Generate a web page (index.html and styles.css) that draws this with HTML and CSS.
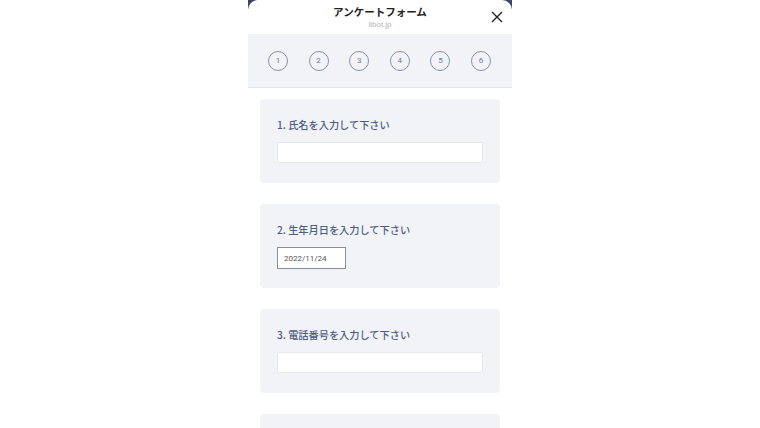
FILE: index.html
```html
<!DOCTYPE html>
<html lang="ja">
<head>
<meta charset="utf-8">
<link rel="stylesheet" href="styles.css">
</head>
<body>
<div class="frame">
  <div class="panel">
    <header class="header">
      <div class="title">アンケートフォーム</div>
      <div class="sub">libot.jp</div>
      <button class="close" aria-label="close">
        <svg width="12" height="12" viewBox="0 0 12 12"><path d="M1 1L11 11M11 1L1 11" stroke="#222" stroke-width="1.4" fill="none"/></svg>
      </button>
    </header>
    <nav class="steps">
      <span class="step">1</span>
      <span class="step">2</span>
      <span class="step">3</span>
      <span class="step">4</span>
      <span class="step">5</span>
      <span class="step">6</span>
    </nav>
    <main class="cards">
      <section class="card">
        <div class="label">1. 氏名を入力して下さい</div>
        <div class="input"></div>
      </section>
      <section class="card">
        <div class="label">2. 生年月日を入力して下さい</div>
        <div class="date">2022/11/24</div>
      </section>
      <section class="card">
        <div class="label">3. 電話番号を入力して下さい</div>
        <div class="input"></div>
      </section>
      <section class="card"></section>
    </main>
  </div>
</div>
</body>
</html>
```
FILE: styles.css
```css
* { box-sizing: border-box; }
html, body { margin: 0; padding: 0; background: #fff; }
body {
  font-family: "Noto Sans CJK JP", "Noto Sans", sans-serif;
  height: 428px;
  overflow: hidden;
}
.frame {
  width: 264px;
  margin-left: 248px;
  background: linear-gradient(#3d4667 0, #3d4667 9px, #fff 9px);
  height: 428px;
}
.panel {
  background: #fff;
  border-radius: 10px 10px 0 0;
  height: 100%;
  overflow: hidden;
}
.header {
  position: relative;
  height: 34px;
  display: flex;
  flex-direction: column;
  align-items: center;
  padding-top: 4px;
}
.title {
  font-size: 10.5px;
  font-weight: 700;
  color: #222;
  line-height: 15px;
}
.sub {
  font-size: 8px;
  color: #b3b5b9;
  line-height: 10px;
  font-family: "Liberation Sans", sans-serif;
  margin-top: 1px;
}
.close {
  position: absolute;
  right: 9px;
  top: 11px;
  border: 0;
  background: none;
  padding: 0;
  width: 12px;
  height: 12px;
  display: block;
}
.close svg { display: block; }
.steps {
  height: 54px;
  background: #f1f3f6;
  border-bottom: 1px solid #e2e4e9;
  display: flex;
  align-items: center;
  justify-content: space-between;
  padding: 0 21px 0 20px;
}
.step {
  width: 20px;
  height: 20px;
  border: 1px solid #8791ad;
  border-radius: 50%;
  display: flex;
  align-items: center;
  justify-content: center;
  font-size: 8px;
  color: #6f7a96;
  font-family: "Roboto", sans-serif;
}
.cards {
  padding: 11px 12px 0;
  display: flex;
  flex-direction: column;
  gap: 21px;
}
.card {
  background: #f1f3f6;
  border-radius: 4px;
  height: 84px;
  padding: 19px 16px 0 17px;
  flex-shrink: 0;
}
.label {
  font-size: 10.2px;
  font-weight: 500;
  color: #4d5d84;
  line-height: 14px;
  height: 24px;
}
.input {
  height: 21px;
  width: 206px;
  background: #fff;
  border: 1px solid #e6e8ec;
  border-radius: 2px;
}
.date {
  width: 69px;
  height: 22px;
  background: #fff;
  border: 1px solid #8a8d93;
  font-family: "Roboto", sans-serif;
  font-size: 8px;
  color: #555;
  display: flex;
  align-items: center;
  padding-left: 6px;
}
```
